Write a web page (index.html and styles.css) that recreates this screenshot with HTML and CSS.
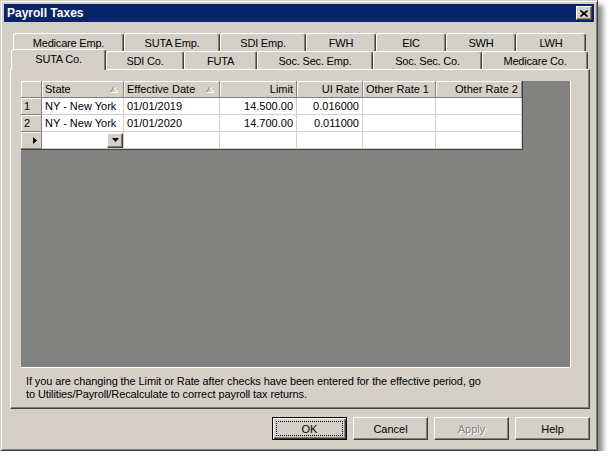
FILE: index.html
```html
<!DOCTYPE html>
<html lang="en">
<head>
    <meta charset="UTF-8">
    <title>Payroll Taxes</title>
    <link rel="stylesheet" href="styles.css">
</head>
<body>
    <div class="window">
        <div class="titlebar">
            <span class="title">Payroll Taxes</span>
            <div class="close-btn">
                <svg width="8" height="7" viewBox="0 0 8 7"><path d="M0.5 0.5 L7.5 6.5 M7.5 0.5 L0.5 6.5" stroke="#000" stroke-width="1.6" fill="none"/></svg>
            </div>
        </div>

        <!-- tab strip, two rows -->
        <div class="tabs">
            <div class="tab-row back">
                <div class="tab t-medicare-emp">Medicare Emp.</div>
                <div class="tab t-suta-emp">SUTA Emp.</div>
                <div class="tab t-sdi-emp">SDI Emp.</div>
                <div class="tab t-small">FWH</div>
                <div class="tab t-small">EIC</div>
                <div class="tab t-small">SWH</div>
                <div class="tab t-small">LWH</div>
            </div>
            <div class="tab-row front">
                <div class="tab selected t-suta-co">SUTA Co.</div>
                <div class="tab t-sdi-co">SDI Co.</div>
                <div class="tab t-futa">FUTA</div>
                <div class="tab t-ss-emp">Soc. Sec. Emp.</div>
                <div class="tab t-ss-co">Soc. Sec. Co.</div>
                <div class="tab t-medicare-co">Medicare Co.</div>
            </div>
        </div>

        <div class="panel">
            <div class="grid-area">
                <table class="grid">
                    <colgroup>
                        <col class="c-ind"><col class="c-state"><col class="c-date"><col class="c-limit">
                        <col class="c-rate"><col class="c-other1"><col class="c-other2">
                    </colgroup>
                    <tr>
                        <th class="ind"></th>
                        <th><div class="sort">State <svg width="8" height="7" viewBox="0 0 8 7"><path d="M4 0.5 L0.5 6.5" stroke="#808080" fill="none"/><path d="M4 0.5 L7.5 6.5 L0.5 6.5" stroke="#fff" fill="none"/></svg></div></th>
                        <th><div class="sort">Effective Date <svg width="8" height="7" viewBox="0 0 8 7"><path d="M4 0.5 L0.5 6.5" stroke="#808080" fill="none"/><path d="M4 0.5 L7.5 6.5 L0.5 6.5" stroke="#fff" fill="none"/></svg></div></th>
                        <th class="num">Limit</th>
                        <th class="num">UI Rate</th>
                        <th>Other Rate 1</th>
                        <th class="num">Other Rate 2</th>
                    </tr>
                    <tr>
                        <td class="ind">1</td>
                        <td>NY - New York</td>
                        <td>01/01/2019</td>
                        <td class="num">14.500.00</td>
                        <td class="num">0.016000</td>
                        <td></td>
                        <td></td>
                    </tr>
                    <tr>
                        <td class="ind">2</td>
                        <td>NY - New York</td>
                        <td>01/01/2020</td>
                        <td class="num">14.700.00</td>
                        <td class="num">0.011000</td>
                        <td></td>
                        <td></td>
                    </tr>
                    <tr class="new-row">
                        <td class="ind"><svg class="row-arrow" width="4" height="7" viewBox="0 0 4 7"><path d="M0 0 L4 3.5 L0 7 Z" fill="#000"/></svg></td>
                        <td class="combo-cell">
                            <div class="combo">
                                <div class="combo-btn"><svg width="7" height="4" viewBox="0 0 7 4"><path d="M0 0 L7 0 L3.5 4 Z" fill="#000"/></svg></div>
                            </div>
                        </td>
                        <td></td>
                        <td></td>
                        <td></td>
                        <td></td>
                        <td></td>
                    </tr>
                </table>
            </div>
            <p class="note">If you are changing the Limit or Rate after checks have been entered for the effective period, go<br>to Utilities/Payroll/Recalculate to correct payroll tax returns.</p>
        </div>

        <div class="buttons">
            <button class="btn default"><span class="focus">OK</span></button>
            <button class="btn">Cancel</button>
            <button class="btn disabled">Apply</button>
            <button class="btn">Help</button>
        </div>
    </div>
</body>
</html>
```

FILE: styles.css
```css
* {
    box-sizing: border-box;
}

body {
    margin: 0;
    background: #fff;
    font-family: "Liberation Sans", Arial, sans-serif;
    font-size: 11px;
    color: #000;
}

.window {
    width: 598px;
    height: 451px;
    padding: 3px;
    display: flex;
    flex-direction: column;
    background: #d4d0c8;
    border: 1px solid;
    border-color: #d4d0c8 #404040 #404040 #d4d0c8;
    box-shadow: inset 1px 1px #fff, inset -1px -1px #808080, 5px 5px 5px rgba(0,0,0,0.45);
}

.titlebar {
    height: 18px;
    padding: 0 2px 0 3px;
    display: flex;
    align-items: center;
    justify-content: space-between;
    background: #0a246a;
}

.title {
    color: #fff;
    font-weight: bold;
    font-size: 12px;
}

.close-btn {
    width: 16px;
    height: 14px;
    display: flex;
    align-items: center;
    justify-content: center;
    background: #d4d0c8;
    border: 1px solid;
    border-color: #fff #404040 #404040 #fff;
    box-shadow: inset -1px -1px #808080;
}

/* tabs */
.tabs {
    margin-top: 11px;
    letter-spacing: -0.2px;
}

.tab-row {
    display: flex;
}

.back {
    margin-left: 9px;
}

.front {
    margin-left: 7px;
    margin-top: -2px;
    height: 20px;
    align-items: flex-end;
}

.tab {
    height: 18px;
    display: flex;
    align-items: center;
    justify-content: center;
    background: #d4d0c8;
    border-top: 1px solid #fff;
    border-left: 1px solid #fff;
    border-right: 1px solid #404040;
    border-radius: 3px 3px 0 0;
    box-shadow: inset -1px 0 #808080;
    white-space: nowrap;
}

.tab.selected {
    position: relative;
    z-index: 1;
    height: 21px;
    margin-bottom: -1px;
    padding-bottom: 3px;
}

.t-medicare-emp { width: 111px; }
.t-suta-emp { width: 96px; }
.t-sdi-emp { width: 86px; }
.t-small { width: 70px; }

.t-suta-co { width: 95px; }
.t-sdi-co { width: 78px; }
.t-futa { width: 73px; }
.t-ss-emp { width: 116px; }
.t-ss-co { width: 109px; }
.t-medicare-co { width: 106px; }

.panel {
    width: 580px;
    height: 340px;
    margin-left: 6px;
    padding: 11px 0 0 10px;
    border-top: 1px solid #fff;
    border-left: 1px solid #fff;
    border-right: 1px solid #404040;
    border-bottom: 1px solid #404040;
    box-shadow: inset -1px -1px #808080;
}

/* data grid */
.grid-area {
    width: 550px;
    height: 287px;
    background: #828280;
    border-right: 1px solid #fff;
    border-bottom: 1px solid #fff;
}

.grid {
    width: 502px;
    table-layout: fixed;
    border-collapse: separate;
    border-spacing: 0;
    background: #fff;
    border-right: 1px solid #404040;
    border-bottom: 1px solid #404040;
}

.c-ind { width: 21px; }
.c-state { width: 82px; }
.c-date { width: 96px; }
.c-limit { width: 77px; }
.c-rate { width: 66px; }
.c-other1 { width: 73px; }
.c-other2 { width: 86px; }

.grid th,
.grid td {
    height: 17px;
    padding: 0 3px;
    white-space: nowrap;
    overflow: hidden;
    text-align: left;
    font-weight: normal;
}

.grid th {
    background: #d4d0c8;
    border-right: 1px solid #808080;
    border-bottom: 1px solid #808080;
    box-shadow: inset 1px 1px #fff;
}

.grid td {
    border-right: 1px solid #d4d0c8;
    border-bottom: 1px solid #d4d0c8;
}

.grid td.ind {
    background: #d4d0c8;
    border-right: 1px solid #808080;
    border-bottom: 1px solid #808080;
    box-shadow: inset 1px 1px #fff;
}

.grid .num {
    text-align: right;
}

.sort {
    display: flex;
    align-items: center;
    justify-content: space-between;
    padding-right: 2px;
}

.row-arrow {
    display: block;
    margin-left: 9px;
}

.grid td.combo-cell {
    padding: 0;
}

.combo {
    display: flex;
    justify-content: flex-end;
}

.combo-btn {
    width: 16px;
    height: 15px;
    display: flex;
    align-items: center;
    justify-content: center;
    background: #d4d0c8;
    border: 1px solid;
    border-color: #fff #404040 #404040 #fff;
    box-shadow: inset -1px -1px #808080;
}

.note {
    margin: 7px 0 0 5px;
    line-height: 13px;
    letter-spacing: -0.1px;
}

/* dialog buttons */
.buttons {
    display: flex;
    justify-content: flex-end;
    gap: 6px;
    margin-top: 8px;
    padding-right: 4px;
}

.btn {
    width: 75px;
    height: 23px;
    padding: 0;
    display: flex;
    align-items: center;
    justify-content: center;
    font-family: "Liberation Sans", Arial, sans-serif;
    font-size: 11px;
    color: #000;
    background: #d4d0c8;
    border: 1px solid;
    border-color: #fff #404040 #404040 #fff;
    box-shadow: inset -1px -1px #808080;
}

.btn.default {
    padding: 3px;
    border-color: #000;
    box-shadow: inset 1px 1px #fff, inset -1px -1px #404040, inset -2px -2px #808080;
}

.focus {
    flex: 1;
    align-self: stretch;
    display: flex;
    align-items: center;
    justify-content: center;
    border: 1px dotted #000;
}

.btn.disabled {
    color: #808080;
    text-shadow: 1px 1px #fff;
}
```
